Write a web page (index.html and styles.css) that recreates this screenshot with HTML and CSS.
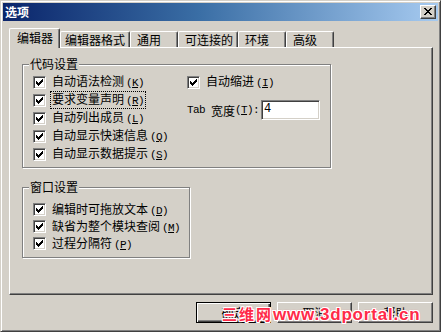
FILE: index.html
```html
<!DOCTYPE html>
<html lang="zh-CN">
<head>
<meta charset="utf-8">
<title>选项</title>
<link rel="stylesheet" href="styles.css">
</head>
<body>
<svg class="defs" width="0" height="0" aria-hidden="true">
  <symbol id="chk" viewBox="0 0 9 9">
    <g fill="#000" shape-rendering="crispEdges">
      <rect x="1" y="3" width="1" height="3"/>
      <rect x="2" y="4" width="1" height="3"/>
      <rect x="3" y="5" width="1" height="3"/>
      <rect x="4" y="4" width="1" height="3"/>
      <rect x="5" y="3" width="1" height="3"/>
      <rect x="6" y="2" width="1" height="3"/>
      <rect x="7" y="1" width="1" height="3"/>
    </g>
  </symbol>
</svg>
<div class="window">
  <div class="titlebar">
    <span class="title">选项</span>
    <span class="close">
      <svg width="8" height="7" viewBox="0 0 8 7" shape-rendering="crispEdges">
        <g fill="#000">
          <rect x="0" y="0" width="2" height="1"/><rect x="6" y="0" width="2" height="1"/>
          <rect x="1" y="1" width="2" height="1"/><rect x="5" y="1" width="2" height="1"/>
          <rect x="2" y="2" width="4" height="1"/>
          <rect x="3" y="3" width="2" height="1"/>
          <rect x="2" y="4" width="4" height="1"/>
          <rect x="1" y="5" width="2" height="1"/><rect x="5" y="5" width="2" height="1"/>
          <rect x="0" y="6" width="2" height="1"/><rect x="6" y="6" width="2" height="1"/>
        </g>
      </svg>
    </span>
  </div>

  <div class="tabs">
    <div class="tab active">编辑器</div>
    <div class="tab t-fmt">编辑器格式</div>
    <div class="tab t-2">通用</div>
    <div class="tab t-4">可连接的</div>
    <div class="tab t-2">环境</div>
    <div class="tab t-2">高级</div>
  </div>

  <div class="panel">
    <div class="group g-code">
      <div class="legend">代码设置</div>
      <div class="g-code-body">
        <div class="col-left">
          <div class="row"><span class="cb"><svg class="chk"><use href="#chk"/></svg></span><span class="lbl">自动语法检测<span class="mn">(<u>K</u>)</span></span></div>
          <div class="row"><span class="cb"><svg class="chk"><use href="#chk"/></svg></span><span class="lbl focus">要求变量声明<span class="mn">(<u>R</u>)</span></span></div>
          <div class="row"><span class="cb"><svg class="chk"><use href="#chk"/></svg></span><span class="lbl">自动列出成员<span class="mn">(<u>L</u>)</span></span></div>
          <div class="row"><span class="cb"><svg class="chk"><use href="#chk"/></svg></span><span class="lbl">自动显示快速信息<span class="mn">(<u>Q</u>)</span></span></div>
          <div class="row"><span class="cb"><svg class="chk"><use href="#chk"/></svg></span><span class="lbl">自动显示数据提示<span class="mn">(<u>S</u>)</span></span></div>
        </div>
        <div class="col-right">
          <div class="row"><span class="cb"><svg class="chk"><use href="#chk"/></svg></span><span class="lbl">自动缩进<span class="mn">(<u>I</u>)</span></span></div>
          <div class="tabrow">
            <span class="asc">Tab </span><span>宽度</span><span class="mn">(<u>T</u>):</span>
            <span class="input">4</span>
          </div>
        </div>
      </div>
    </div>

    <div class="group g-win">
      <div class="legend">窗口设置</div>
      <div class="g-win-body">
        <div class="row r17"><span class="cb"><svg class="chk"><use href="#chk"/></svg></span><span class="lbl">编辑时可拖放文本<span class="mn">(<u>D</u>)</span></span></div>
        <div class="row r17"><span class="cb"><svg class="chk"><use href="#chk"/></svg></span><span class="lbl">缺省为整个模块查阅<span class="mn">(<u>M</u>)</span></span></div>
        <div class="row r17"><span class="cb"><svg class="chk"><use href="#chk"/></svg></span><span class="lbl">过程分隔符<span class="mn">(<u>P</u>)</span></span></div>
      </div>
    </div>
  </div>

  <div class="buttons">
    <span class="btn default">确定</span>
    <span class="btn">取消</span>
    <span class="btn">帮助</span>
  </div>

  <div class="watermark"><span class="wm-cn">三维网</span>www.3dportal.cn</div>
</div>
</body>
</html>
```

FILE: styles.css
```css
* { box-sizing: border-box; }
html, body { margin: 0; padding: 0; }
body {
  width: 441px;
  height: 332px;
  overflow: hidden;
  background: #d4d0c8;
  font-family: "Noto Sans CJK SC", "Liberation Sans", sans-serif;
  font-size: 12px;
  color: #000;
}
.defs { position: absolute; width: 0; height: 0; }

.window {
  position: relative;
  width: 441px;
  height: 332px;
  background: #d4d0c8;
  border: 1px solid;
  border-color: #d4d0c8 #404040 #404040 #d4d0c8;
  box-shadow: inset 1px 1px #fff, inset -1px -1px #808080;
  padding: 2px;
}

.titlebar {
  height: 18px;
  background: linear-gradient(to right, #0a246a 0%, #3a6ea5 45%, #a6caf0 100%);
  display: flex;
  align-items: center;
  justify-content: space-between;
  padding: 0 2px 0 2px;
}
.title {
  color: #fff;
  font-weight: 700;
  font-size: 12px;
  line-height: 14px;
}
.close {
  width: 16px;
  height: 14px;
  background: #d4d0c8;
  border: 1px solid;
  border-color: #fff #404040 #404040 #fff;
  box-shadow: inset -1px -1px #808080;
  display: flex;
  align-items: center;
  justify-content: center;
  padding-bottom: 1px;
}
.close svg { display: block; }

.tabs {
  position: relative;
  z-index: 1;
  height: 26px;
  display: flex;
  align-items: flex-end;
  padding-left: 6px;
}
.tab {
  height: 16px;
  border: 1px solid;
  border-color: #fff #404040 transparent #fff;
  border-bottom: none;
  border-radius: 2px 2px 0 0;
  box-shadow: inset -1px 0 #808080;
  background: #d4d0c8;
  padding: 0 0 0 6px;
  line-height: 15px;
  white-space: nowrap;
}
.tab.active {
  width: 51px;
  height: 20px;
  margin-bottom: -1px;
  padding-left: 7px;
  line-height: 17px;
}
.t-fmt { width: 70px; padding-left: 4px; }
.t-2 { width: 48px; }
.t-4 { width: 60px; }

.panel {
  margin: 0 5px 0 6px;
  height: 248px;
  border: 1px solid;
  border-color: #fff #404040 #404040 #fff;
  box-shadow: inset -1px -1px #808080;
  padding: 16px 0 0 12px;
}

.group {
  border: 1px solid #808080;
  box-shadow: inset 1px 1px #fff, 1px 1px #fff;
}
.legend {
  width: max-content;
  height: 14px;
  line-height: 14px;
  margin: -8px 0 0 6px;
  padding: 0 1px;
  background: #d4d0c8;
}
.g-code { width: 309px; height: 104px; }
.g-code-body { display: flex; padding-top: 2px; }
.col-left { width: 164px; padding-left: 10px; }
.col-right { display: flex; flex-direction: column; }

.g-win { width: 168px; height: 71px; margin-top: 19px; }
.g-win-body { padding: 7px 0 0 10px; }

.row {
  height: 18px;
  display: flex;
  align-items: center;
}
.row.r17 { height: 17px; }

.cb {
  width: 13px;
  height: 13px;
  flex: none;
  background: #fff;
  border: 1px solid;
  border-color: #808080 #fff #fff #808080;
  box-shadow: inset 1px 1px #404040, inset -1px -1px #d4d0c8;
  padding: 1px;
}
.chk { display: block; width: 9px; height: 9px; }

.lbl {
  margin-left: 4px;
  padding: 0 1px;
  border: 1px solid transparent;
  line-height: 14px;
  white-space: nowrap;
}
.lbl.focus { border: 1px dotted #000; }

.mn {
  font-family: "Liberation Mono", monospace;
  font-size: 11px;
  letter-spacing: -0.6px;
  margin-left: 2px;
}
.asc {
  font-family: "Liberation Mono", monospace;
  font-size: 11px;
  letter-spacing: -0.6px;
  white-space: pre;
}

.tabrow {
  margin-top: 9px;
  height: 20px;
  display: flex;
  align-items: center;
  white-space: nowrap;
}
.tabrow .mn { margin-left: 0; }
.input {
  margin-left: 2px;
  width: 59px;
  height: 20px;
  background: #fff;
  border: 1px solid;
  border-color: #808080 #fff #fff #808080;
  box-shadow: inset 1px 1px #404040, inset -1px -1px #d4d0c8;
  padding: 0 0 0 2px;
  font-family: "Liberation Mono", monospace;
  font-size: 12px;
  line-height: 17px;
}

.buttons {
  display: flex;
  justify-content: flex-end;
  gap: 6px;
  margin: 7px 5px 0 0;
}
.btn {
  width: 75px;
  height: 21px;
  border: 1px solid;
  border-color: #fff #404040 #404040 #fff;
  box-shadow: inset -1px -1px #808080;
  display: flex;
  align-items: center;
  justify-content: center;
  line-height: 14px;
}
.btn.default {
  border: 1px solid #000;
  box-shadow: inset 1px 1px #fff, inset -1px -1px #404040, inset -2px -2px #808080;
}

.watermark {
  position: absolute;
  left: 221px;
  top: 303px;
  font-family: "Liberation Sans", sans-serif;
  font-weight: 700;
  font-size: 17px;
  letter-spacing: 0.8px;
  line-height: 20px;
  color: #ff2a48;
  white-space: nowrap;
  text-shadow: 1px 0 #fff, -1px 0 #fff, 0 1px #fff, 0 -1px #fff,
               1px 1px #fff, -1px -1px #fff, 1px -1px #fff, -1px 1px #fff,
               0 0 2px #ff2a48;
}
.wm-cn {
  font-family: "Noto Sans CJK SC", sans-serif;
  font-size: 15px;
  letter-spacing: 2px;
}
```
